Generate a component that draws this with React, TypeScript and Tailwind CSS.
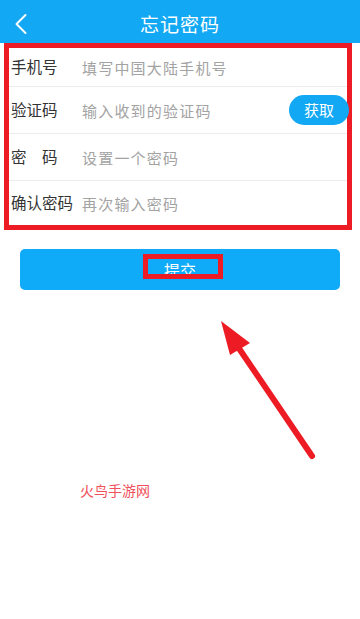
import { ChevronLeft } from 'lucide-react'

const font = { fontFamily: '"Noto Sans CJK SC", "Noto Sans", sans-serif' }

function Row({ label, placeholder, height, last, children }: {
  label: string
  placeholder: string
  height: string
  last?: boolean
  children?: React.ReactNode
}) {
  return (
    <div className={`flex items-center ${height} ${last ? '' : 'border-b border-[#ececec]'}`}>
      <span className="w-[73px] pl-[2px] text-[15.5px] leading-none text-[#333] whitespace-pre">{label}</span>
      <span className="flex-1 text-[15px] leading-none tracking-[1.2px] text-[#a3a3a3]">{placeholder}</span>
      {children}
    </div>
  )
}

export default function App() {
  return (
    <div className="relative h-[619px] w-[360px] overflow-hidden bg-white" style={font}>
      <header className="relative flex h-[43px] items-center justify-center bg-[#12a8f4] pt-[6px]">
        <ChevronLeft className="absolute left-[3px] top-[6px] text-white" size={36} strokeWidth={1.3} />
        <h1 className="text-[19px] tracking-[1px] text-white">忘记密码</h1>
      </header>

      <div className="ml-[4px] mr-[8px] border-[5.5px] border-[#ed1c24] bg-white">
        <Row label="手机号" placeholder="填写中国大陆手机号" height="h-[39px]" />
        <Row label="验证码" placeholder="输入收到的验证码" height="h-[47px]">
          <button className="-mr-[2px] h-[30px] w-[60px] rounded-full bg-[#12a8f4] text-[15px] text-white">获取</button>
        </Row>
        <Row label="密　码" placeholder="设置一个密码" height="h-[47px]" />
        <Row label="确认密码" placeholder="再次输入密码" height="h-[44px]" last />
      </div>

      <div className="relative mx-[20px] mt-[19px] flex h-[41px] items-center justify-center rounded-[5px] bg-[#0faaf8]">
        <span className="text-[16px] leading-none text-white">提交</span>
        <div className="absolute left-[123px] top-[5px] h-[25px] w-[80px] border-[5px] border-[#ed1c24]" />
      </div>

      <p className="ml-[80px] mt-[193px] text-[14px] leading-none text-[#f0505a]">火鸟手游网</p>

      <svg className="absolute left-0 top-0" width="360" height="619" viewBox="0 0 360 619">
        <line x1="312" y1="456" x2="236" y2="344" stroke="#ed1c24" strokeWidth="6" strokeLinecap="round" />
        <polygon points="221,321 250,343 230,355" fill="#ed1c24" />
      </svg>
    </div>
  )
}
